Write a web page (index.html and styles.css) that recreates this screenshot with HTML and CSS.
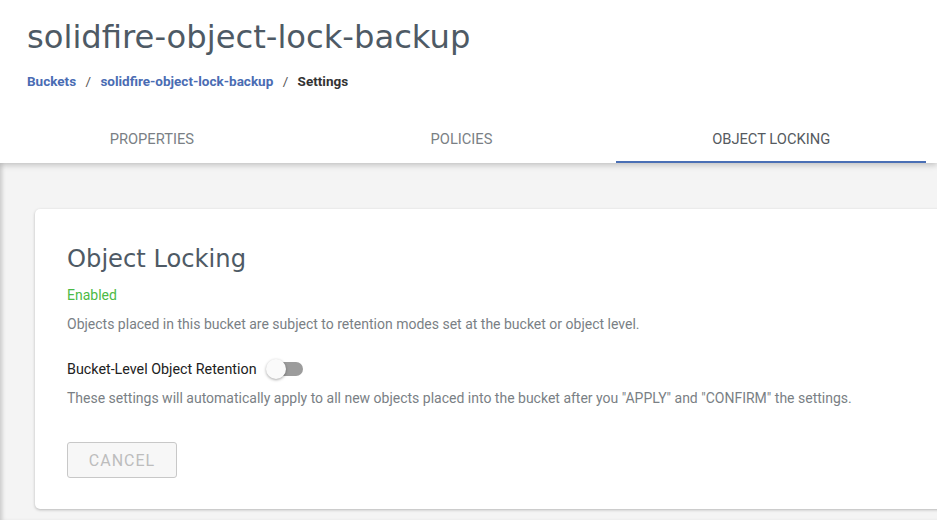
FILE: index.html
```html
<!DOCTYPE html>
<html>
<head>
<meta charset="utf-8">
<link rel="stylesheet" href="styles.css">
</head>
<body>
<div class="page">
  <header class="header">
    <h1 class="title">solidfire-object-lock-backup</h1>
    <nav class="crumbs">
      <a class="crumb-link">Buckets</a>
      <span class="sep">/</span>
      <a class="crumb-link">solidfire-object-lock-backup</a>
      <span class="sep">/</span>
      <span class="crumb-current">Settings</span>
    </nav>
    <div class="tabs">
      <div class="tab">PROPERTIES</div>
      <div class="tab">POLICIES</div>
      <div class="tab tab-active">OBJECT LOCKING</div>
    </div>
  </header>
  <main class="content">
    <section class="card">
      <h2 class="card-title">Object Locking</h2>
      <div class="status">Enabled</div>
      <p class="desc">Objects placed in this bucket are subject to retention modes set at the bucket or object level.</p>
      <div class="toggle-row">
        <span class="toggle-label">Bucket-Level Object Retention</span>
        <span class="toggle"><span class="track"></span><span class="thumb"></span></span>
      </div>
      <p class="desc desc-settings">These settings will automatically apply to all new objects placed into the bucket after you "APPLY" and "CONFIRM" the settings.</p>
      <button class="btn-cancel">CANCEL</button>
    </section>
  </main>
</div>
</body>
</html>
```
FILE: styles.css
```css
html, body {
  margin: 0;
  padding: 0;
  height: 100%;
  overflow: hidden;
}
body {
  background: #f4f4f4;
  font-family: Roboto, "Liberation Sans", sans-serif;
}
.page {
  min-height: 100%;
  box-shadow: inset 4px 0 4px -2px rgba(0,0,0,0.18);
}
.header {
  background: #fff;
  padding-top: 14px;
  box-shadow: 0 2px 6px rgba(0,0,0,0.22);
  position: relative;
}
.title {
  margin: 0;
  padding-left: 27px;
  font-family: "DejaVu Sans", sans-serif;
  font-weight: normal;
  font-size: 32.2px;
  line-height: 46px;
  color: #4e5a65;
}
.crumbs {
  margin-top: 11px;
  padding-left: 27px;
  font-size: 13.5px;
  line-height: 20px;
  font-weight: 700;
}
.crumb-link { color: #4a6cb3; }
.sep { color: #555; font-weight: 400; margin: 0 6px; }
.crumb-current { color: #333; }
.tabs {
  margin-top: 24px;
  margin-left: -3px;
  margin-right: 11px;
  display: grid;
  grid-template-columns: 1fr 1fr 1fr;
}
.tab {
  height: 48px;
  line-height: 48px;
  text-align: center;
  font-size: 14.7px;
  color: #7a7f85;
}
.tab-active {
  color: #555a60;
  box-shadow: inset 0 -2px 0 #4a6fb5;
}
.content {
  padding: 46px 0 0 35px;
}
.card {
  background: #fff;
  border-radius: 5px;
  margin-right: -30px;
  padding: 32px 32px 31px;
  box-shadow: 0 1px 3px rgba(0,0,0,0.25);
}
.card-title {
  margin: 0;
  font-family: "DejaVu Sans", sans-serif;
  font-weight: normal;
  font-size: 24.2px;
  line-height: 36px;
  color: #4e5a65;
}
.status {
  margin-top: 8px;
  font-size: 14px;
  line-height: 20px;
  color: #4cba45;
}
.desc {
  margin: 9px 0 0;
  font-size: 14px;
  line-height: 20px;
  color: #7a7f85;
}
.toggle-row {
  margin-top: 23px;
  display: flex;
  align-items: center;
  height: 24px;
}
.toggle-label {
  font-size: 14.3px;
  color: #212121;
}
.toggle {
  position: relative;
  margin-left: 9px;
  width: 37px;
  height: 20px;
  display: inline-block;
}
.track {
  position: absolute;
  left: 1px;
  top: 3px;
  width: 36px;
  height: 14px;
  border-radius: 7px;
  background: #9c9c9c;
}
.thumb {
  position: absolute;
  left: 0;
  top: 0;
  width: 20px;
  height: 20px;
  border-radius: 50%;
  background: #fafafa;
  box-shadow: 0 1px 3px rgba(0,0,0,0.35);
}
.desc-settings { margin-top: 7px; }
.btn-cancel {
  display: block;
  margin-top: 34px;
  width: 110px;
  height: 36px;
  background: #f7f7f7;
  border: 1px solid #c8c8c8;
  border-radius: 3px;
  font-family: Roboto, sans-serif;
  font-size: 16px;
  letter-spacing: 1px;
  color: #bdbdbd;
  padding: 0;
}
```
